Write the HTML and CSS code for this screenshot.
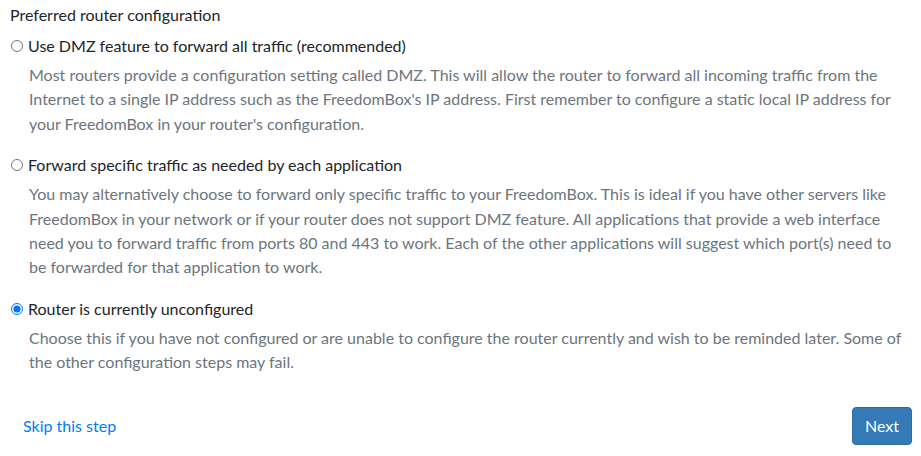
FILE: index.html
```html
<!DOCTYPE html>
<html>
<head>
<meta charset="utf-8">
<link rel="stylesheet" href="styles.css">
</head>
<body>
<form class="page">
  <div class="field-label">Preferred router configuration</div>
  <div class="option">
    <label class="radio-label"><input type="radio" name="router"> Use DMZ feature to forward all traffic (recommended)</label>
    <p class="help">Most routers provide a configuration setting called DMZ. This will allow the router to forward all incoming traffic from the Internet to a single IP address such as the FreedomBox's IP address. First remember to configure a static local IP address for your FreedomBox in your router's configuration.</p>
  </div>
  <div class="option">
    <label class="radio-label"><input type="radio" name="router"> Forward specific traffic as needed by each application</label>
    <p class="help">You may alternatively choose to forward only specific traffic to your FreedomBox. This is ideal if you have other servers like FreedomBox in your network or if your router does not support DMZ feature. All applications that provide a web interface need you to forward traffic from ports 80 and 443 to work. Each of the other applications will suggest which port(s) need to be forwarded for that application to work.</p>
  </div>
  <div class="option">
    <label class="radio-label"><input type="radio" name="router" checked> Router is currently unconfigured</label>
    <p class="help">Choose this if you have not configured or are unable to configure the router currently and wish to be reminded later. Some of the other configuration steps may fail.</p>
  </div>
  <div class="actions">
    <a class="skip" href="#">Skip this step</a>
    <button type="button" class="btn-next">Next</button>
  </div>
</form>
</body>
</html>
```

FILE: styles.css
```css
html, body {
  margin: 0;
  padding: 0;
  background: #fff;
}
body {
  font-family: Lato, "Open Sans", sans-serif;
  font-size: 16px;
  color: #212529;
}
.page {
  padding: 3px 9px 0 10px;
}
.field-label {
  line-height: 24px;
  margin-bottom: 7px;
}
.option {
  margin-bottom: 17px;
}
.radio-label {
  display: flex;
  align-items: center;
  line-height: 24px;
}
.radio-label input {
  margin: 0 5px 0 1px;
  width: 12px;
  height: 12px;
}
.help {
  margin: 5px 0 0 19px;
  color: #6c757d;
  line-height: 24.4px;
}
.actions {
  display: flex;
  justify-content: space-between;
  align-items: center;
  margin-top: 32px;
  padding-left: 13px;
}
.skip {
  color: #007bff;
  text-decoration: none;
}
.btn-next {
  font-family: inherit;
  font-size: 16px;
  color: #fff;
  background: #337ab7;
  border: 1px solid #2e6da4;
  border-radius: 4px;
  width: 60px;
  height: 38px;
  padding: 0;
}
```
